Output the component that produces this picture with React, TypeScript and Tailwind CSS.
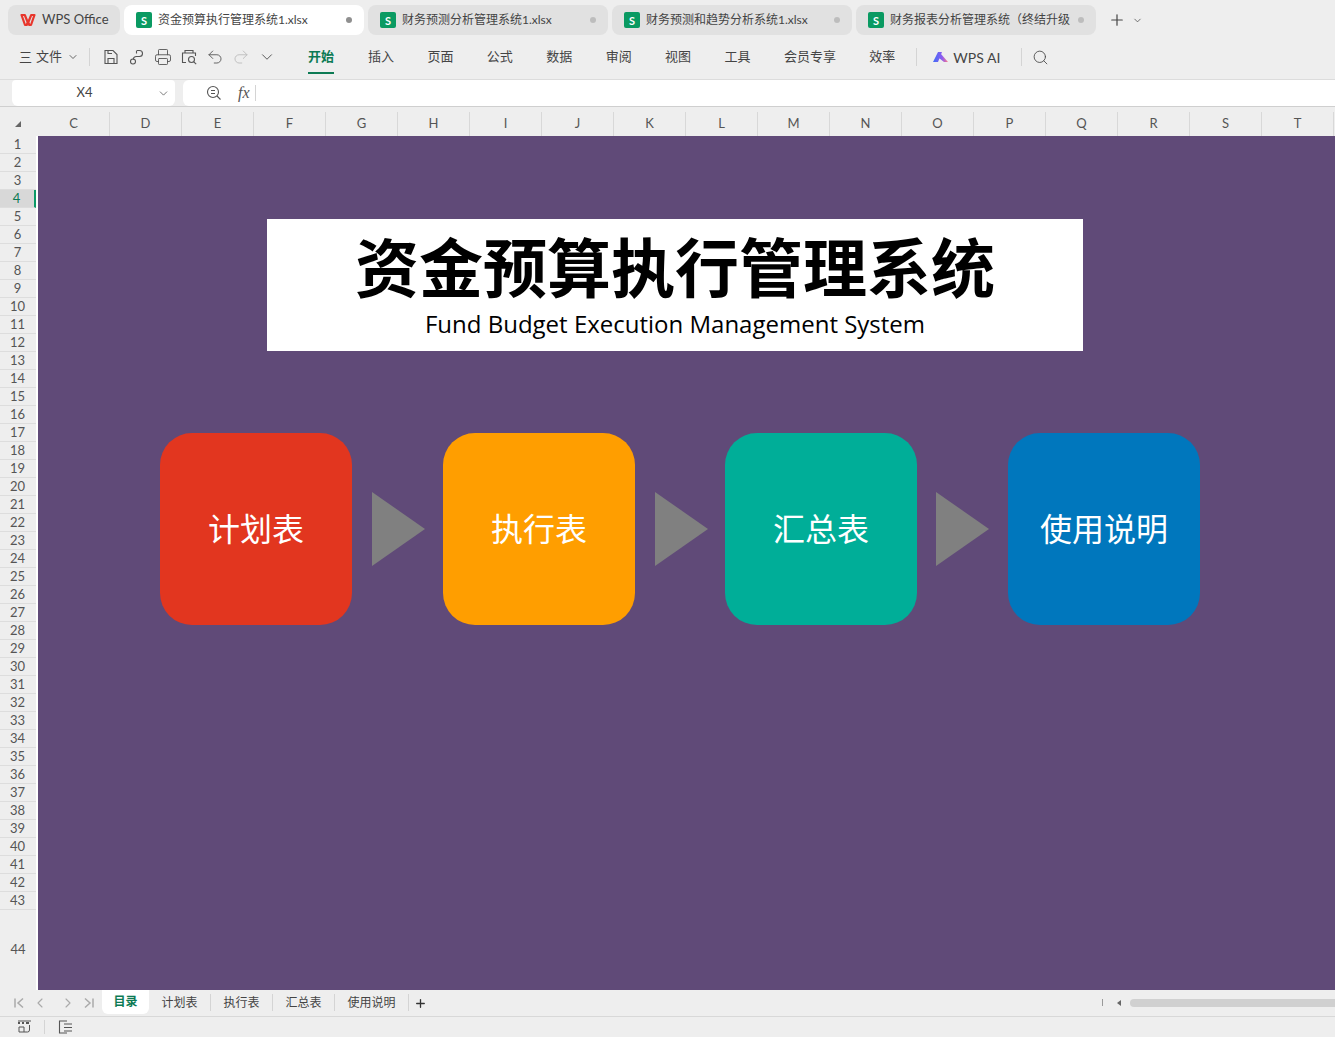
import { ChevronDown, ChevronLeft, ChevronRight, Plus, Printer, Search, Undo2, Redo2 } from "lucide-react";

const FONT = "font-['Lato','Noto_Sans_CJK_SC',sans-serif]";

const fileTabs = [
  { name: "资金预算执行管理系统1.xlsx", active: true },
  { name: "财务预测分析管理系统1.xlsx", active: false },
  { name: "财务预测和趋势分析系统1.xlsx", active: false },
  { name: "财务报表分析管理系统（终结升级版）.xlsx", active: false },
];

const ribbonTabs = ["插入", "页面", "公式", "数据", "审阅", "视图", "工具", "会员专享", "效率"];
const columns = ["C", "D", "E", "F", "G", "H", "I", "J", "K", "L", "M", "N", "O", "P", "Q", "R", "S", "T"];
const rows = Array.from({ length: 43 }, (_, i) => i + 1);
const sheets = ["计划表", "执行表", "汇总表", "使用说明"];

function SheetIcon() {
  return (
    <span className="flex h-4 w-4 shrink-0 items-center justify-center rounded-[2px] bg-[#0a9a62] text-[11px] font-bold leading-none text-white">
      S
    </span>
  );
}

function FileTab({ name, active }: { name: string; active: boolean }) {
  return (
    <div className={`flex h-[30px] w-[240px] items-center rounded-lg pl-3 pr-[12px] ${active ? "bg-white" : "bg-[#e1e1e1]"}`}>
      <SheetIcon />
      <span className="ml-1.5 w-[180px] overflow-hidden whitespace-nowrap text-[12px] text-[#444]">{name}</span>
      <span className={`ml-auto h-[6px] w-[6px] rounded-full ${active ? "bg-[#8f8f8f]" : "bg-[#bdbdbd]"}`} />
    </div>
  );
}

function Separator() {
  return <span className="h-[18px] w-px bg-[#d4d4d4]" />;
}

function Arrow() {
  return (
    <svg width="53" height="74" viewBox="0 0 53 74" className="shrink-0">
      <polygon points="0,0 53,37 0,74" fill="#808080" />
    </svg>
  );
}

function FlowCard({ label, color }: { label: string; color: string }) {
  return (
    <div className={`flex h-[192px] w-[192px] shrink-0 items-center justify-center rounded-[32px] text-[32px] text-white ${color}`}>
      {label}
    </div>
  );
}

function QuickIcons() {
  return (
    <div className="ml-[12px] flex items-center gap-[8px] text-[#555]">
      <svg width="18" height="18" viewBox="0 0 18 18" fill="none" stroke="currentColor" strokeWidth="1.1">
        <path d="M3 2.5h8l4 4v9H3z" />
        <path d="M6 15.5v-5h6v5M6 2.5v3h4" />
      </svg>
      <svg width="18" height="18" viewBox="0 0 18 18" fill="none" stroke="currentColor" strokeWidth="1.1">
        <path d="M9 2.5h2.5a3 3 0 0 1 0 6H8.5a3.2 3.2 0 0 0-3.2 3.2M8.5 2.5v3" />
        <circle cx="5" cy="13.5" r="2.5" />
      </svg>
      <Printer size={18} strokeWidth={1.2} />
      <svg width="18" height="18" viewBox="0 0 18 18" fill="none" stroke="currentColor" strokeWidth="1.1">
        <path d="M5 5V2.5h8V5M6 14.5H2.5V5h13v3" />
        <circle cx="11.5" cy="11.5" r="3" />
        <path d="m13.8 13.8 2.4 2.4" />
      </svg>
      <Undo2 size={18} strokeWidth={1.2} />
      <Redo2 size={18} strokeWidth={1.2} className="text-[#bbb]" />
      <ChevronDown size={18} strokeWidth={1.3} />
    </div>
  );
}

export default function App() {
  return (
    <div className={`flex h-[1037px] w-[1335px] flex-col overflow-hidden bg-[#eeeeee] ${FONT}`}>
      {/* title bar */}
      <div className="flex h-[35px] items-end gap-1 pl-2">
        <div className="flex h-[30px] w-[112px] items-center rounded-lg bg-[#e1e1e1] pl-3">
          <svg width="16" height="14" viewBox="0 0 16 14" fill="none" stroke="#e8362c" strokeWidth="2.2" strokeLinejoin="round">
            <path d="M1.5 2h3.3l3.2 8 3.2-8h3.3L11 12H9.3L8 8.5 6.7 12H5z" />
          </svg>
          <span className="ml-1.5 text-[13px] text-[#444]">WPS Office</span>
        </div>
        {fileTabs.map((tab) => (
          <FileTab key={tab.name} name={tab.name} active={tab.active} />
        ))}
        <div className="ml-2 flex h-[30px] items-center gap-[6px] text-[#444]">
          <Plus size={18} strokeWidth={1.6} />
          <ChevronDown size={11} strokeWidth={1.6} />
        </div>
      </div>

      {/* ribbon */}
      <div className="flex h-[45px] items-center border-b border-[#dcdcdc] pl-[19px] text-[13px] text-[#444]">
        <span className="w-[10px] text-center text-[13px] leading-none">三</span>
        <span className="ml-[7px]">文件</span>
        <ChevronDown size={12} strokeWidth={1.6} className="ml-[5px] mr-[10px]" />
        <Separator />
        <QuickIcons />
        <span className="ml-[11px]"><Separator /></span>
        <div className="relative ml-[21px] font-bold text-[#0c7a54]">
          开始
          <span className="absolute -bottom-[7px] left-0 h-[2px] w-full bg-[#0c7a54]" />
        </div>
        <div className="ml-[34px] flex items-center gap-[33.4px]">
          {ribbonTabs.map((tab) => (
            <span key={tab}>{tab}</span>
          ))}
        </div>
        <span className="ml-[21px] flex items-center"><Separator /></span>
        <svg width="16" height="14" viewBox="0 0 16 14" className="ml-[16px]">
          <defs>
            <linearGradient id="ai" x1="0" y1="0" x2="1" y2="0">
              <stop offset="0" stopColor="#3f6df6" />
              <stop offset="0.6" stopColor="#8a5cf0" />
              <stop offset="1" stopColor="#ff7a8a" />
            </linearGradient>
          </defs>
          <path d="M0 12 5 2h4L5 12zM6 8l2-4 7 8h-4z" fill="url(#ai)" />
        </svg>
        <span className="ml-[4px] text-[14px]">WPS AI</span>
        <span className="ml-[21px] flex items-center"><Separator /></span>
        <Search size={17} strokeWidth={1.2} className="ml-[10px]" />
      </div>

      {/* formula bar */}
      <div className="flex h-[27px] items-stretch border-b border-[#cfcfcf] pl-3">
        <div className="relative flex w-[163px] items-center rounded-b-md rounded-t-sm bg-white text-[13px] text-[#444]">
          <span className="w-full pr-[18px] text-center">X4</span>
          <ChevronDown size={13} strokeWidth={1.3} className="absolute right-[5px]" />
        </div>
        <div className="ml-2 flex flex-1 items-center rounded-l-md bg-white text-[#555]">
          <svg width="16" height="16" viewBox="0 0 16 16" fill="none" stroke="currentColor" strokeWidth="1.1" className="ml-[23px]">
            <circle cx="7" cy="7" r="5.5" />
            <path d="m11 11 3.5 3.5M5 5.5h4M5 8.5h4" />
          </svg>
          <span className="ml-[16px] font-['Liberation_Serif',serif] text-[16px] italic">fx</span>
          <span className="ml-[5px] h-[16px] w-px bg-[#d4d4d4]" />
        </div>
      </div>

      {/* column headers */}
      <div className="mt-[5px] flex h-[24px] text-[13px] text-[#555]">
        <div className="flex w-[38px] shrink-0 items-center pl-[15px]">
          <span className="h-0 w-0 border-b-[6px] border-l-[6px] border-b-[#666] border-l-transparent" />
        </div>
        {columns.map((col) => (
          <div key={col} className="flex w-[72px] shrink-0 items-center justify-center border-r border-[#d8d8d8]">
            {col}
          </div>
        ))}
      </div>

      {/* grid */}
      <div className="flex h-[854px]">
        <div className="flex w-[36px] shrink-0 flex-col text-[13px] text-[#555]">
          {rows.map((row) => (
            <div
              key={row}
              className={`flex h-[18px] shrink-0 items-center justify-center border-b border-[#dddddd] pr-[1px] ${
                row === 4 ? "border-r-2 border-r-[#0c9a68] bg-[#d8d8d8] text-[#0c7a54]" : ""
              }`}
            >
              {row}
            </div>
          ))}
          <div className="flex flex-1 items-center justify-center">44</div>
        </div>
        <div className="w-[2px] shrink-0 bg-white" />
        <div className="flex-1 bg-[#604a78] pt-[83px]">
          <div className="ml-[229px] flex h-[132px] w-[816px] flex-col items-center bg-white text-black">
            <div className="mt-[5px] font-['Noto_Sans_CJK_SC',sans-serif] text-[64px] font-bold leading-[80px]">资金预算执行管理系统</div>
            <div className="mt-[4px] font-['Open_Sans',sans-serif] text-[24px] leading-[32px]">Fund Budget Execution Management System</div>
          </div>
          <div className="ml-[122px] mt-[82px] flex items-center">
            <FlowCard label="计划表" color="bg-[#e2361f]" />
            <div className="ml-[20px] mr-[18px] mt-[0px]"><Arrow /></div>
            <FlowCard label="执行表" color="bg-[#ff9e00]" />
            <div className="ml-[20px] mr-[17px]"><Arrow /></div>
            <FlowCard label="汇总表" color="bg-[#00ae98]" />
            <div className="ml-[19px] mr-[19px]"><Arrow /></div>
            <FlowCard label="使用说明" color="bg-[#0077bd]" />
          </div>
        </div>
      </div>

      {/* sheet tabs */}
      <div className="flex h-[27px] items-start border-b border-[#d8d8d8] text-[12px] text-[#444]">
        <div className="flex h-[25px] w-[102px] items-center gap-[5px] pl-[11px] text-[#aaa]">
          <svg width="16" height="16" viewBox="0 0 16 16" fill="none" stroke="currentColor" strokeWidth="1.5">
            <path d="M4 3.5v9M12 3.5 7 8l5 4.5" />
          </svg>
          <ChevronLeft size={16} strokeWidth={1.7} />
          <ChevronRight size={16} strokeWidth={1.7} className="ml-[7px]" />
          <svg width="16" height="16" viewBox="0 0 16 16" fill="none" stroke="currentColor" strokeWidth="1.5">
            <path d="M12 3.5v9M4 3.5 9 8l-5 4.5" />
          </svg>
        </div>
        <div className="flex h-[24px] w-[47px] items-center justify-center rounded-b-md bg-white font-bold text-[#0c7a54]">目录</div>
        {sheets.map((sheet) => (
          <div key={sheet} className="mt-[4px] flex h-[17px] items-center border-r border-[#d4d4d4] px-[12.5px]">
            {sheet}
          </div>
        ))}
        <Plus size={13} strokeWidth={2.4} className="ml-[5px] mt-[7px] text-[#333]" />
        <span className="ml-auto mt-[9px] h-[7px] w-px bg-[#999]" />
        <span className="ml-[14px] mt-[10px] h-0 w-0 border-y-[3px] border-r-[4px] border-y-transparent border-r-[#666]" />
        <div className="ml-[9px] mt-[9px] h-[8px] w-[205px] rounded-l-full bg-[#d0d0d0]" />
      </div>

      {/* status bar */}
      <div className="flex flex-1 items-center pl-[17px] text-[#555]">
        <svg width="15" height="15" viewBox="0 0 15 15" fill="none" stroke="currentColor" strokeWidth="1">
          <path d="M1 1h13M2 7h5v5H2zM7 12h3.5a2 2 0 0 0 2-2V5" />
          <path d="M1 3h2M5 3h2M9 3h3" strokeWidth="2" />
        </svg>
        <span className="ml-[12px] h-[14px] w-px bg-[#d4d4d4]" />
        <svg width="15" height="14" viewBox="0 0 15 14" fill="none" stroke="currentColor" strokeWidth="1.1" className="ml-[13px]">
          <path d="M9 1H1.5v12H9M6 4h8M6 7.5h8M6 11h8" />
        </svg>
      </div>
    </div>
  );
}
